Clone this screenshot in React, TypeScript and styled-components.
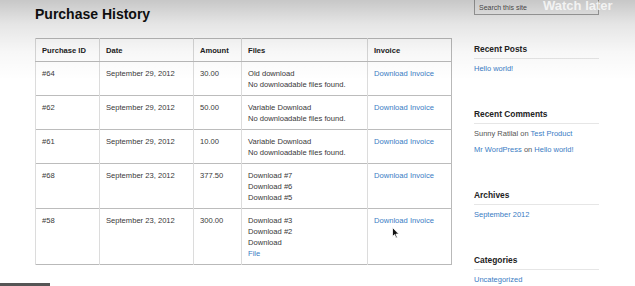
import React from "react";
import styled, { createGlobalStyle } from "styled-components";

const Global = createGlobalStyle`
  html, body { margin: 0; padding: 0; background: #ffffff; }
  body {
    width: 635px;
    height: 286px;
    overflow: hidden;
    position: relative;
    font-family: "Liberation Sans", Arial, Helvetica, sans-serif;
    color: #3a3a3a;
  }
`;

const Page = styled.div`
  display: flex;
  align-items: flex-start;
  padding-left: 35px;
  gap: 23px;
`;

const Main = styled.main`
  width: 416px;
  display: flex;
  flex-direction: column;
`;

const Title = styled.h1`
  margin: 0;
  padding-top: 6px;
  font-size: 14px;
  line-height: 16px;
  font-weight: bold;
  color: #111;
`;

const Table = styled.table`
  margin-top: 16px;
  width: 416px;
  table-layout: fixed;
  border-collapse: collapse;
  border: 1px solid #b9b9b9;
  font-size: 7.6px;
  line-height: 11px;
`;

const Th = styled.th`
  text-align: left;
  font-weight: bold;
  color: #222;
  padding: 6px 6px 5px 6px;
  border-left: 1px solid #d8d8d8;
  border-bottom: 1px solid #b9b9b9;
  vertical-align: top;
  white-space: nowrap;
`;

const Td = styled.td`
  padding: 6px 6px 5px 6px;
  border-left: 1px solid #dcdcdc;
  border-top: 1px solid #bcbcbc;
  vertical-align: top;
  color: #383838;
  white-space: nowrap;
`;

const Line = styled.div``;

const Link = styled.a`
  color: #3a7cc4;
  text-decoration: none;
`;

const Sidebar = styled.aside`
  width: 125px;
  display: flex;
  flex-direction: column;
`;

const Search = styled.div`
  box-sizing: border-box;
  margin-top: -3px;
  height: 18px;
  width: 125px;
  border: 1px solid #a9a9a9;
  background: #fff;
  font-size: 7px;
  color: #555;
  padding: 5px 0 0 4px;
  line-height: 10px;
`;

const Widget = styled.section<{ $first?: boolean }>`
  margin-top: ${(p) => (p.$first ? "28px" : "29px")};
`;

const WidgetTitle = styled.h3`
  margin: 0;
  font-size: 8.4px;
  line-height: 12px;
  font-weight: bold;
  color: #222;
  padding-bottom: 3px;
  border-bottom: 1px solid #e6e6e6;
`;

const List = styled.ul`
  list-style: none;
  margin: 4px 0 0;
  padding: 0;
`;

const Item = styled.li`
  font-size: 7.5px;
  line-height: 12px;
  margin-bottom: 4px;
  color: #555;
  white-space: nowrap;
`;

const Shade = styled.div`
  position: absolute;
  left: 0;
  top: 0;
  width: 635px;
  height: 80px;
  pointer-events: none;
  background: linear-gradient(
    to bottom,
    rgba(0, 0, 0, 0.22) 0%,
    rgba(0, 0, 0, 0.1) 30%,
    rgba(0, 0, 0, 0.03) 65%,
    rgba(0, 0, 0, 0) 100%
  );
`;

const WatchLater = styled.div`
  position: absolute;
  left: 543px;
  top: 0;
  font-size: 13px;
  line-height: 11px;
  font-weight: bold;
  color: rgba(255, 255, 255, 0.75);
  white-space: nowrap;
`;

const Progress = styled.div`
  position: absolute;
  left: 0;
  bottom: 0;
  width: 50px;
  height: 3px;
  background: #555;
`;

const Cursor = styled.svg`
  position: absolute;
  left: 392px;
  top: 227px;
`;

type Row = {
  id: string;
  date: string;
  amount: string;
  files: React.ReactNode[];
};

const rows: Row[] = [
  { id: "#64", date: "September 29, 2012", amount: "30.00", files: ["Old download", "No downloadable files found."] },
  { id: "#62", date: "September 29, 2012", amount: "50.00", files: ["Variable Download", "No downloadable files found."] },
  { id: "#61", date: "September 29, 2012", amount: "10.00", files: ["Variable Download", "No downloadable files found."] },
  { id: "#68", date: "September 23, 2012", amount: "377.50", files: ["Download #7", "Download #6", "Download #5"] },
  {
    id: "#58",
    date: "September 23, 2012",
    amount: "300.00",
    files: ["Download #3", "Download #2", "Download", <Link href="#">File</Link>],
  },
];

export default function App() {
  return (
    <>
      <Global />
      <Page>
        <Main>
          <Title>Purchase History</Title>
          <Table>
            <colgroup>
              <col style={{ width: 64 }} />
              <col style={{ width: 94 }} />
              <col style={{ width: 48 }} />
              <col style={{ width: 126 }} />
              <col style={{ width: 84 }} />
            </colgroup>
            <thead>
              <tr>
                <Th>Purchase ID</Th>
                <Th>Date</Th>
                <Th>Amount</Th>
                <Th>Files</Th>
                <Th>Invoice</Th>
              </tr>
            </thead>
            <tbody>
              {rows.map((r) => (
                <tr key={r.id}>
                  <Td>{r.id}</Td>
                  <Td>{r.date}</Td>
                  <Td>{r.amount}</Td>
                  <Td>
                    {r.files.map((f, i) => (
                      <Line key={i}>{f}</Line>
                    ))}
                  </Td>
                  <Td>
                    <Link href="#">Download Invoice</Link>
                  </Td>
                </tr>
              ))}
            </tbody>
          </Table>
        </Main>
        <Sidebar>
          <Search>Search this site</Search>
          <Widget $first>
            <WidgetTitle>Recent Posts</WidgetTitle>
            <List>
              <Item>
                <Link href="#">Hello world!</Link>
              </Item>
            </List>
          </Widget>
          <Widget>
            <WidgetTitle>Recent Comments</WidgetTitle>
            <List>
              <Item>
                Sunny Ratilal on <Link href="#">Test Product</Link>
              </Item>
              <Item>
                <Link href="#">Mr WordPress</Link> on <Link href="#">Hello world!</Link>
              </Item>
            </List>
          </Widget>
          <Widget>
            <WidgetTitle>Archives</WidgetTitle>
            <List>
              <Item>
                <Link href="#">September 2012</Link>
              </Item>
            </List>
          </Widget>
          <Widget>
            <WidgetTitle>Categories</WidgetTitle>
            <List>
              <Item>
                <Link href="#">Uncategorized</Link>
              </Item>
            </List>
          </Widget>
        </Sidebar>
      </Page>
      <Shade />
      <WatchLater>Watch later</WatchLater>
      <Progress />
      <Cursor width="8" height="12" viewBox="0 0 8 12">
        <path d="M0.5 0.5 L0.5 9.5 L2.6 7.6 L4 11 L5.3 10.4 L3.9 7.1 L6.8 7.1 Z" fill="#111" stroke="#fff" strokeWidth="0.8" />
      </Cursor>
    </>
  );
}
